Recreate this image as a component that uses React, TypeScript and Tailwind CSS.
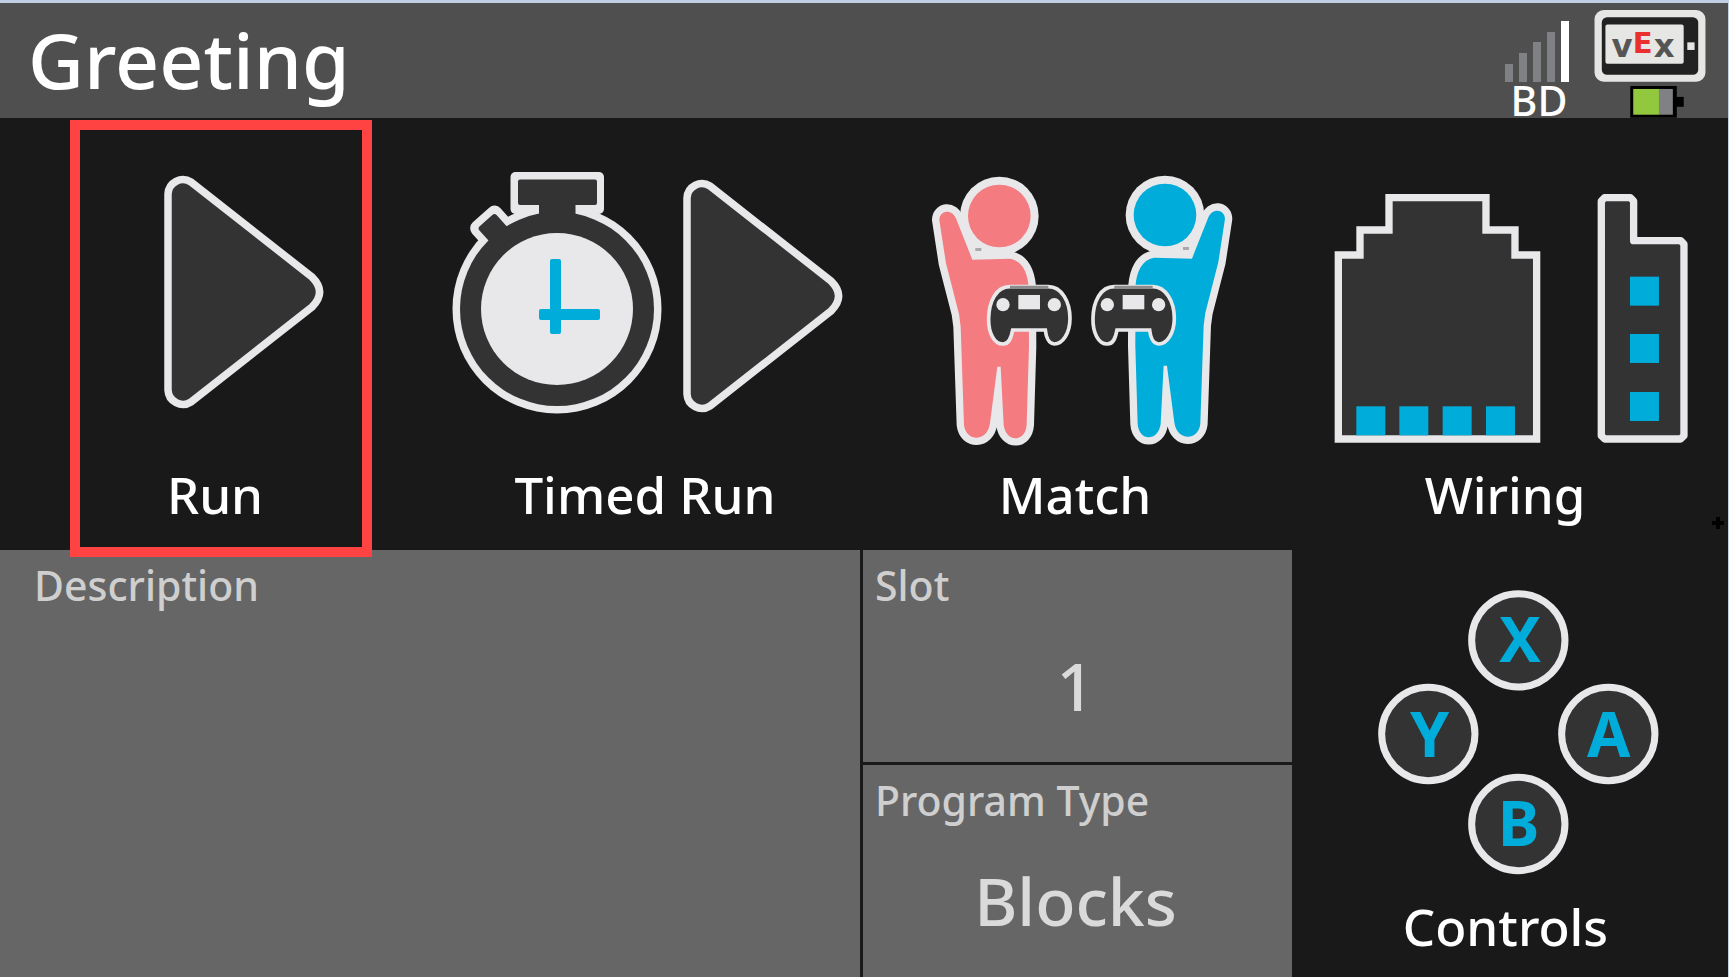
import type { ReactNode } from 'react'

const Triangle = ({ transform }: { transform?: string }) => (
  <path
    transform={transform}
    d="M168 76 A15 15 0 0 1 191 64 L312 159 Q327 174 312 189 L191 284 A15 15 0 0 1 168 272 Z"
    fill="#333333"
    stroke="#e8e8ea"
    strokeWidth="7.5"
    strokeLinejoin="round"
  />
)

const RunIcon = () => (
  <svg viewBox="0 0 430 340" className="h-[340px] w-full" aria-hidden="true">
    <Triangle />
  </svg>
)

const TimedRunIcon = () => (
  <svg viewBox="0 0 430 340" className="h-[340px] w-full" aria-hidden="true">
    <g fill="#e8e8ea">
      <circle cx="127" cy="191" r="104.5" />
      <rect x="80.5" y="54" width="93.5" height="42" rx="5" />
      <rect x="-19" y="0" width="38" height="30" rx="8" transform="translate(51 97) rotate(-42)" />
    </g>
    <g fill="#333333">
      <circle cx="127" cy="191" r="97" />
      <rect x="88" y="61.5" width="79" height="25.5" rx="2" />
      <rect x="109" y="85" width="36.5" height="20" />
      <rect x="-11.5" y="7.5" width="23" height="30" rx="3" transform="translate(51 97) rotate(-42)" />
    </g>
    <circle cx="127" cy="191" r="76" fill="#e8e8ea" />
    <rect x="120" y="141" width="11" height="75" rx="2" fill="#00acd9" />
    <rect x="109" y="191" width="61" height="11" rx="2" fill="#00acd9" />
    <Triangle transform="translate(89 4)" />
  </svg>
)

const bodyPath =
  'M88 180 C88 150 127 144 139 178 L187 299 L300 296 C338 302 353 340 356 380 L357 560 L350 795 C346 848 288 848 281 795 L272 620 L262 620 L240 790 C232 848 168 846 162 795 L152 500 L147 462 L108 310 Z'

const Player = ({ color, transform }: { color: string; transform?: string }) => (
  <g transform={transform}>
    <circle cx="268" cy="168" r="118" fill="#e8e8ea" />
    <path d="M150 190 L185 290 H300 V260 L200 230 Z" fill="#e8e8ea" />
    <path d={bodyPath} fill="#e8e8ea" stroke="#e8e8ea" strokeWidth="44" strokeLinejoin="round" />
    <path d={bodyPath} fill={color} />
    <circle cx="268" cy="168" r="94" fill={color} />
    <rect x="196" y="264" width="18" height="9" fill="#a9a9a9" />
  </g>
)

const Gamepad = ({ transform }: { transform?: string }) => (
  <g transform={transform}>
    <path
      d="M300 380 H415 C455 380 480 425 480 475 C480 520 458 552 433 552 C416 552 408 530 406 510 H308 C304 532 298 552 279 552 C252 552 235 518 236 475 C237 425 258 380 300 380 Z"
      fill="#333333"
      stroke="#e8e8ea"
      strokeWidth="11"
    />
    <path d="M300 382 H415" stroke="#8c8c8c" strokeWidth="9" />
    <circle cx="279" cy="434" r="20" fill="#e8e8ea" />
    <circle cx="433" cy="434" r="20" fill="#e8e8ea" />
    <rect x="325" y="405" width="65" height="43" fill="#e8e8ea" />
  </g>
)

const MatchIcon = () => (
  <svg viewBox="0 0 430 340" className="h-[340px] w-full" aria-hidden="true">
    <g transform="translate(50 42) scale(0.3333)">
      <Player color="#f47c80" />
      <Player color="#00acd9" transform="translate(1033 -3) scale(-1 1)" />
      <Gamepad />
      <Gamepad transform="translate(313 0)" />
    </g>
  </svg>
)

const WiringIcon = () => (
  <svg viewBox="0 0 430 340" className="h-[340px] w-full" aria-hidden="true">
    <g transform="translate(20 52) scale(0.3333)">
      <g fill="#333333" stroke="#e8e8ea" strokeWidth="22">
        <path d="M85 255 H150 V180 H237 V83 H528 V180 H615 V255 H680 V807 H85 Z" />
        <path
          d="M884 83 H961 L971 93 V212 H1112 L1122 222 V797 L1112 807 H884 L874 797 V93 Z"
          strokeLinejoin="round"
        />
      </g>
      <g fill="#00acd9">
        {[139, 268, 398, 528].map((x) => (
          <rect key={x} x={x} y="709" width="87" height="87" />
        ))}
        {[320, 492, 666].map((y) => (
          <rect key={y} x="960" y={y} width="87" height="87" />
        ))}
      </g>
    </g>
  </svg>
)

const padButtons = [
  { name: 'X', cx: 505, cy: 211, tx: 510, ty: 276 },
  { name: 'Y', cx: 235, cy: 492, tx: 239, ty: 560 },
  { name: 'A', cx: 775, cy: 492, tx: 776, ty: 560 },
  { name: 'B', cx: 505, cy: 762, tx: 506, ty: 829 },
]

const ControlsIcon = () => (
  <svg viewBox="0 0 421 340" className="h-[340px] w-full" aria-hidden="true">
    <g transform="translate(55 20) scale(0.3333)">
      {padButtons.map((b) => (
        <g key={b.name}>
          <circle cx={b.cx} cy={b.cy} r="140" fill="#333333" stroke="#e8e8ea" strokeWidth="21" />
          <text x={b.tx} y={b.ty} textAnchor="middle" fontSize="188" fontWeight="700" fill="#00acd9">
            {b.name}
          </text>
        </g>
      ))}
    </g>
  </svg>
)

const BrainIcon = () => (
  <svg viewBox="342 30 336 219" className="h-[73px] w-28" role="img" aria-label="Brain">
    <rect x="342" y="30" width="336" height="217" rx="28" fill="#e6e6e4" />
    <rect x="364" y="52" width="292" height="174" rx="16" fill="#222222" />
    <rect x="375" y="74" width="237" height="119" rx="6" fill="#e6e6e4" />
    <rect x="623" y="128" width="22" height="23" fill="#e6e6e4" />
    <g fontFamily="DejaVu Sans" fontWeight="700" textAnchor="middle">
      <text x="425" y="172" fontSize="98" fill="#555555">v</text>
      <text x="553" y="172" fontSize="98" fill="#555555">x</text>
      <text x="488" y="161" fontSize="88" fill="#ea2f2f">E</text>
    </g>
  </svg>
)

const BatteryIcon = () => (
  <svg viewBox="0 0 54 32" className="mr-[22px] mt-1 h-8 w-[54px] self-end" role="img" aria-label="Battery">
    <rect width="47" height="32" />
    <rect x="46" y="11" width="8" height="10" />
    <rect x="3" y="3" width="26" height="26" fill="#92c83e" />
    <rect x="29" y="3" width="14" height="26" fill="#808184" />
  </svg>
)

const SignalBars = () => (
  <div className="flex items-end gap-[6px]">
    <span className="h-[18px] w-2 bg-[#808184]" />
    <span className="h-[29px] w-2 bg-[#808184]" />
    <span className="h-[40px] w-2 bg-[#808184]" />
    <span className="h-[50px] w-2 bg-[#808184]" />
    <span className="h-[61px] w-2 bg-white" />
  </div>
)

const Tile = ({ label, selected, children }: { label: string; selected?: boolean; children: ReactNode }) => (
  <button type="button" className="relative flex flex-col items-center">
    {children}
    <span className="text-[51px] leading-[72px] font-medium text-white">{label}</span>
    {selected && (
      <span className="absolute -bottom-[7px] left-[70px] right-[58px] top-[2px] z-10 border-10 border-[#ff4343]" />
    )}
  </button>
)

const Panel = ({ label, value }: { label: string; value: string }) => (
  <div className="flex-1 bg-[#666666] px-3 pt-[7px]">
    <h2 className="text-[41px] leading-[56px] font-medium text-[#cfcfcf]">{label}</h2>
    <p className="mt-[26px] pr-1 text-center text-[66px] leading-[92px] font-medium text-[#dadada]">{value}</p>
  </div>
)

const App = () => {
  return (
    <div className="flex min-h-screen flex-col bg-[#c0cfe3] pr-px pt-[3px] font-['Noto_Sans',sans-serif]">
      <header className="flex h-[115px] justify-between bg-[#4f4f4f] pl-7 pr-[22px]">
        <h1 className="text-[77px] leading-[114px] font-medium text-white">Greeting</h1>
        <div className="flex gap-[25px]">
          <div className="flex flex-col items-center pt-[18px]">
            <SignalBars />
            <span className="pl-1 text-[41px] leading-[36px] font-medium text-white">BD</span>
          </div>
          <div className="flex flex-col pt-[7px]">
            <BrainIcon />
            <BatteryIcon />
          </div>
        </div>
      </header>

      <nav className="relative grid h-[432px] grid-cols-4 items-stretch bg-[#191919] pr-2">
        <Tile label="Run" selected>
          <RunIcon />
        </Tile>
        <Tile label="Timed Run">
          <TimedRunIcon />
        </Tile>
        <Tile label="Match">
          <MatchIcon />
        </Tile>
        <Tile label="Wiring">
          <WiringIcon />
        </Tile>
        <svg viewBox="0 0 12 12" className="absolute bottom-[21px] right-1 h-3 w-3" aria-hidden="true">
          <path d="M4 0h4v4h4v4h-4v4h-4v-4h-4v-4h4z" />
        </svg>
      </nav>

      <main className="grid flex-1 grid-cols-[860fr_429fr_433fr] gap-[3px] bg-[#191919]">
        <section className="bg-[#666666] pl-[34px] pt-[7px]">
          <h2 className="text-[41px] leading-[56px] font-medium text-[#cfcfcf]">Description</h2>
        </section>
        <div className="flex flex-col gap-[3px]">
          <Panel label="Slot" value="1" />
          <Panel label="Program Type" value="Blocks" />
        </div>
        <button type="button" className="flex flex-col items-center pr-3">
          <ControlsIcon />
          <span className="text-[51px] leading-[72px] font-medium text-white">Controls</span>
        </button>
      </main>
    </div>
  )
}

export default App
